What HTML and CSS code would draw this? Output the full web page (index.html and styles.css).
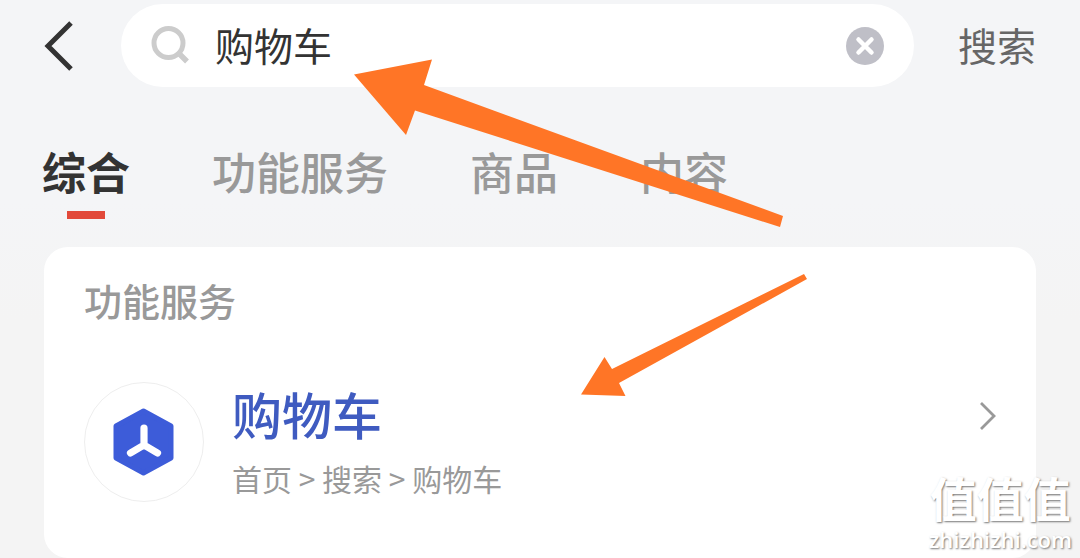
FILE: index.html
```html
<!DOCTYPE html>
<html lang="zh-CN">
<head>
<meta charset="utf-8">
<meta name="viewport" content="width=device-width, initial-scale=1">
<title>购物车 - 搜索</title>
<link rel="stylesheet" href="styles.css">
</head>
<body>
<header class="header">
  <button class="back" type="button" aria-label="返回">
    <svg width="30" height="50" viewBox="0 0 30 50"><path d="M27 2 4 25 27 48" fill="none" stroke="#333" stroke-width="5"/></svg>
  </button>
  <form class="search" id="search" role="search">
    <svg class="search-icon" width="40" height="40" viewBox="0 0 40 40" aria-hidden="true"><circle cx="17.500" cy="17" r="14.500" fill="none" stroke="#ccc" stroke-width="5"/><path d="M27.500 27 36 35.500" stroke="#ccc" stroke-width="5.500"/></svg>
    <input class="search-input" type="text" value="购物车" aria-label="搜索内容">
    <button class="clear" type="reset" aria-label="清除">
      <svg width="38" height="38" viewBox="0 0 38 38"><circle cx="19" cy="19" r="19" fill="#bfbfc7"/><path d="M12.500 12.500 25.500 25.500M25.500 12.500 12.500 25.500" stroke="#fff" stroke-width="4.500" stroke-linecap="round"/></svg>
    </button>
  </form>
  <button class="submit" type="submit" form="search">搜索</button>
</header>
<nav class="tabs">
  <a class="tab active" href="#all" aria-current="page">综合</a>
  <a class="tab" href="#service">功能服务</a>
  <a class="tab" href="#goods">商品</a>
  <a class="tab" href="#content">内容</a>
</nav>
<main class="card">
  <h2 class="card-title">功能服务</h2>
  <a class="result" href="#cart">
    <span class="logo">
      <svg width="62" height="68" viewBox="0 0 62 68" aria-hidden="true"><path d="M30.500 3 58 18V50L30.500 65 3 50V18Z" fill="#3d5cd9" stroke="#3d5cd9" stroke-width="5" stroke-linejoin="round"/><path d="M31 20V38M31 37 17.500 45M31 37 44.500 45" stroke="#fff" stroke-width="7.200" stroke-linecap="round" fill="none"/></svg>
    </span>
    <span class="info">
      <span class="name">购物车</span>
      <span class="path">首页 &gt; 搜索 &gt; 购物车</span>
    </span>
    <svg class="chevron" width="18" height="30" viewBox="0 0 18 30" aria-hidden="true"><path d="M3 2 16 15 3 28" fill="none" stroke="#999" stroke-width="2.800"/></svg>
  </a>
</main>
<svg class="arrows" width="1080" height="558" viewBox="0 0 1080 558" aria-hidden="true">
  <path d="M354 74.500 432 59.500 424 85 783 216 780 227 415 110.500 406 135Z" fill="#ff7526"/>
  <path d="M581 394.500 604.500 357 612 369 804 274 807 279 619 383 625.500 396Z" fill="#ff7526"/>
</svg>
<div class="watermark"><span class="mark-name">值值值</span><span class="mark-site">zhizhizhi.com</span></div>
</body>
</html>
```

FILE: styles.css
```css
* { box-sizing: border-box; }
body {
  margin: 0;
  position: relative;
  background: linear-gradient(#f4f5f7 200px, #f4f4f4 320px);
  font-family: "Noto Sans CJK SC", sans-serif;
  color: #333;
}
button {
  padding: 0;
  border: 0;
  background: none;
  font: inherit;
  color: inherit;
}
svg { display: block; }
a { color: inherit; text-decoration: none; }
.header {
  display: flex;
  align-items: center;
  padding: 4px 44px 0;
}
.back { margin-right: 47px; }
.search {
  flex: 1;
  min-width: 0;
  height: 83px;
  display: flex;
  align-items: center;
  padding: 0 30px;
  border-radius: 42px;
  background: #fff;
}
.search-icon { flex: none; }
.search-input {
  flex: 1;
  min-width: 0;
  height: 60px;
  margin-left: 24px;
  padding: 0 0 4px;
  border: 0;
  outline: 0;
  background: none;
  font: 400 39px/56px "Noto Sans CJK SC", sans-serif;
  color: #333;
}
.submit {
  margin-left: 44px;
  padding-bottom: 4px;
  font-size: 39px;
  font-weight: 400;
  line-height: 56px;
  color: #666;
}
.tabs {
  display: flex;
  gap: 82px;
  padding: 54px 42px 28px;
}
.tab {
  display: flex;
  flex-direction: column;
  align-items: center;
  height: 78px;
  font-family: "Noto Sans CJK SC Medium", "Noto Sans CJK SC", sans-serif;
  font-size: 44px;
  font-weight: 500;
  line-height: 60px;
  color: #999;
}
.active {
  font-family: "Noto Sans CJK SC", sans-serif;
  font-weight: 700;
  color: #333;
}
.active::after {
  content: "";
  width: 38px;
  height: 8px;
  margin-top: 10px;
  background: #e2493a;
}
.card {
  margin: 0 44px;
  padding: 26px 40px 56px;
  border-radius: 24px;
  background: #fff;
}
.card-title {
  margin: 0;
  font-family: "Noto Sans CJK SC Medium", "Noto Sans CJK SC", sans-serif;
  font-size: 38px;
  font-weight: 500;
  line-height: 54px;
  color: #999;
}
.result {
  display: flex;
  align-items: flex-start;
  padding-top: 55px;
}
.logo {
  flex: none;
  display: grid;
  place-items: center;
  width: 120px;
  height: 120px;
  border: 1px solid #eee;
  border-radius: 50%;
}
.info {
  flex: 1;
  display: flex;
  flex-direction: column;
  margin-left: 28px;
}
.name {
  font-family: "Noto Sans CJK SC Medium", "Noto Sans CJK SC", sans-serif;
  font-size: 50px;
  font-weight: 500;
  line-height: 62px;
  color: #3f5bc0;
}
.path {
  margin-top: 12px;
  font-size: 30px;
  font-weight: 400;
  line-height: 44px;
  color: #999;
}
.chevron { margin-top: 19px; }
.arrows {
  position: absolute;
  top: 0;
  left: 0;
  pointer-events: none;
}
.watermark {
  position: absolute;
  right: 8px;
  top: 466px;
  display: flex;
  flex-direction: column;
  align-items: center;
  color: #fff;
  text-shadow: 1px 1px 2px #777;
}
.mark-name {
  font-size: 47px;
  font-weight: 700;
  line-height: 62px;
}
.mark-site {
  font: 600 22px/22px "Open Sans", sans-serif;
}
```
